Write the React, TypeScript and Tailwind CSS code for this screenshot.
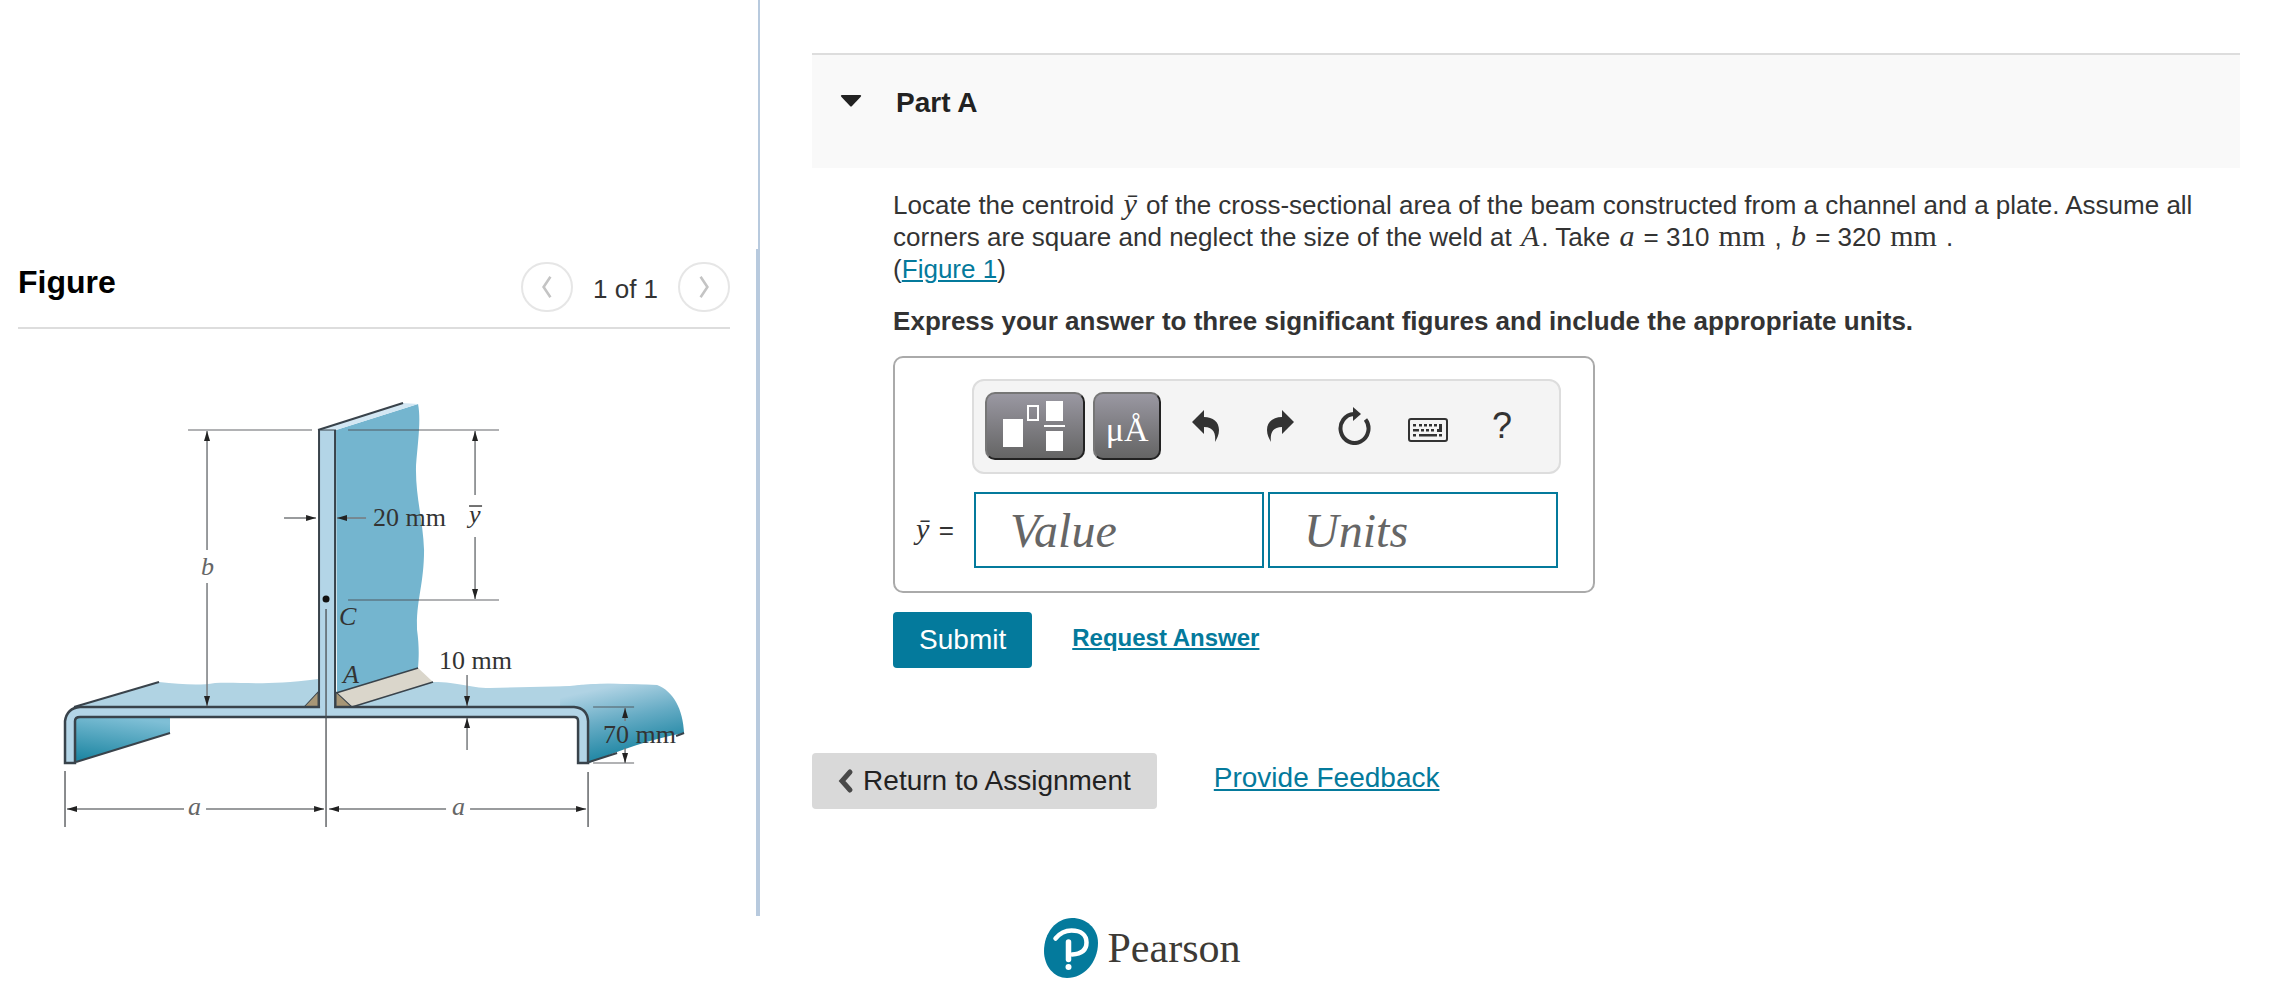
import { useState, type ReactNode } from 'react'

const INK = '#4a4d50'
const EDGE = '#39434b'

const tools: { label: string; icon: ReactNode }[] = [
  { label: 'Undo', icon: <UndoIcon /> },
  { label: 'Redo', icon: <RedoIcon /> },
  { label: 'Reset', icon: <ResetIcon /> },
  { label: 'Keyboard shortcuts', icon: <KeyboardIcon /> },
  { label: 'Help', icon: <span className="text-[36px] leading-10">?</span> },
]

function UndoIcon() {
  return (
    <svg width="28" height="32" viewBox="0 0 28 32" fill="#333">
      <path d="M0 12 L12 0 V7 C21 7 27 12 27 20 C27 25 25 28 23 32 C24 24 22 17 12 17 V24 Z" />
    </svg>
  )
}

function RedoIcon() {
  return (
    <svg width="28" height="32" viewBox="0 0 28 32" fill="#333">
      <path d="M28 12 L16 0 V7 C7 7 1 12 1 20 C1 25 3 28 5 32 C4 24 6 17 16 17 V24 Z" />
    </svg>
  )
}

function ResetIcon() {
  return (
    <svg width="34" height="38" viewBox="0 0 34 38">
      <path d="M17 7 A14 14.500 0 1 0 28.500 12.500" fill="none" stroke="#333" strokeWidth="4" />
      <path d="M16 0 L24 7 L16 14 Z" fill="#333" />
    </svg>
  )
}

function KeyboardIcon() {
  return (
    <svg className="mt-2" width="40" height="24" viewBox="0 0 40 24" fill="#333">
      <rect x="1" y="1" width="38" height="22" rx="2" fill="none" stroke="#333" strokeWidth="2" />
      {[5, 11, 16, 21, 26].map((x) => (
        <rect key={x} x={x} y="6" width="3" height="2.500" />
      ))}
      <path d="M31 6 H34 V14 H29 V11 H31 Z" />
      <rect x="5" y="11" width="6" height="2.500" />
      {[13, 18, 23].map((x) => (
        <rect key={x} x={x} y="11" width="3" height="2.500" />
      ))}
      <rect x="5" y="16" width="3" height="2.500" />
      <rect x="11" y="16" width="18" height="2.500" />
      <rect x="31" y="16" width="3" height="2.500" />
    </svg>
  )
}

function TemplatesIcon() {
  return (
    <svg width="64" height="52" viewBox="0 0 64 52" fill="#fff">
      <rect x="0" y="19" width="20" height="28" />
      <rect x="25" y="6" width="10" height="14" fill="none" stroke="#fff" strokeWidth="2" />
      <rect x="43" y="1" width="17" height="20" />
      <rect x="41" y="25" width="21" height="2" />
      <rect x="43" y="31" width="17" height="20" />
    </svg>
  )
}

function PearsonMark() {
  return (
    <svg width="54" height="60" viewBox="0 0 54 60">
      <path d="M28 0 C42 0 54 10 54 25 C54 44 40 60 23 60 C10 60 0 48 0 33 C0 15 12 0 28 0 Z" fill="#047a9c" />
      <path
        d="M11.500 20.500 C16 15 21 12.500 27.500 12.500 C37 12.500 42.500 17 42.500 24.500 C42.500 32 37 36 28 36.500"
        fill="none"
        stroke="#fff"
        strokeWidth="4.500"
        strokeLinecap="round"
      />
      <path d="M24.500 24 L24.500 41.500" stroke="#fff" strokeWidth="5.500" strokeLinecap="round" />
      <circle cx="24.500" cy="49" r="3" fill="#fff" />
    </svg>
  )
}

// Dimension arrow from (x1, y1) to (x2, y2), head at the second point
function Arrow({ x1, y1, x2, y2 }: { x1: number; y1: number; x2: number; y2: number }) {
  return <line x1={x1} y1={y1} x2={x2} y2={y2} stroke="#777a7d" strokeWidth="1.500" markerEnd="url(#head)" />
}

function BeamFigure() {
  return (
    <svg
      className="w-full h-auto"
      viewBox="18 380 712 460"
      fontFamily='"Liberation Serif", serif'
      fontSize="26"
      fill="#333"
      role="img"
      aria-label="Beam built from a channel and a plate"
    >
      <defs>
        <marker id="head" markerUnits="userSpaceOnUse" markerWidth="10" markerHeight="8" refX="10" refY="4" orient="auto">
          <path d="M0 1 L10 4 L0 7 Z" fill="#222" />
        </marker>
        <linearGradient id="lip" x1="0.6" y1="0" x2="0.3" y2="1">
          <stop offset="0" stopColor="#7fbfd6" />
          <stop offset="1" stopColor="#1f87a3" />
        </linearGradient>
        <linearGradient id="flange" gradientUnits="userSpaceOnUse" x1="625" y1="683" x2="640" y2="750">
          <stop offset="0" stopColor="#b0d3e4" />
          <stop offset="0.500" stopColor="#65abc4" />
          <stop offset="1" stopColor="#2288a5" />
        </linearGradient>
      </defs>

      {/* Top surface of the channel */}
      <path d="M74 707 L159 682 C180 684 198 686 215 683 C245 682 262 686 318 679 V707 Z" fill="#b0d3e3" />
      <path d="M74 707 L159 682" stroke={EDGE} strokeWidth="2" />
      <path d="M352 707 L433 682 C460 682 468 688 490 688 L575 686 C600 682 630 684 657 686 V707 Z" fill="#b0d3e3" />
      <path d="M560 687 C600 682 630 684 657 685 C673 691 683 709 684 733 C650 739 620 750 589 763 V721 Q588 707 560 707 Z" fill="url(#flange)" />
      <path d="M589 762 L617 753 M676 736 L684 733" stroke={EDGE} strokeWidth="2" />
      <path d="M75 718 H170 V733 L76 762 Z" fill="url(#lip)" />
      <path d="M76 762 L170 733" stroke={EDGE} strokeWidth="2" />

      {/* Vertical plate */}
      <path
        d="M336 430 L418 404 C421 420 418 440 416 465 C415 495 423 520 424 550 C424 585 416 600 417 630 C419 645 419 655 418 668 L337 694 Z"
        fill="#74b5cf"
      />
      <path d="M318 430 L403 403 L418 404 L336 430 Z" fill="#d3e7f3" />
      <path d="M318 430 L403 403" stroke={EDGE} strokeWidth="2" />
      <rect x="319" y="430" width="16" height="278" fill="#b3d5e7" />
      <path d="M319 430 V707 M335 430 V707" stroke={EDGE} strokeWidth="2" />
      <path d="M319 430 H336" stroke={EDGE} />

      {/* Weld */}
      <path d="M336 693 L418 668 L433 682 L352 707 Z" fill="#dad6cb" />
      <path d="M336 693 L418 668 M352 707 L433 682" stroke={EDGE} strokeWidth="1.500" />
      <path d="M336 692 L352 707 H336 Z M304 707 L318 692 V707 Z" fill="#a79676" stroke={EDGE} />

      {/* Channel section */}
      <path
        d="M65 763 V721 Q67 708 80 707 H574 Q587 708 588 721 V763 H578 V721 Q578 717 574 717 H80 Q75 717 75 721 V763 Z"
        fill="#b3d5e7"
        stroke={EDGE}
        strokeWidth="2.500"
      />
      <rect x="320" y="700" width="14" height="9" fill="#b3d5e7" />

      {/* Extension lines */}
      <g stroke={INK} strokeWidth="1" opacity="0.85">
        <path d="M188 430 H312 M348 430 H499 M348 600 H499 M593 707 H634 M593 763 H634" />
        <path d="M326 609 V827 M65 771 V827 M588 772 V827" strokeWidth="1.500" />
      </g>
      <circle cx="326" cy="599" r="3.500" fill="#111" />

      <Arrow x1={207} y1={550} x2={207} y2={431} />
      <Arrow x1={207} y1={583} x2={207} y2={706} />
      <Arrow x1={475} y1={495} x2={475} y2={431} />
      <Arrow x1={475} y1={537} x2={475} y2={599} />
      <Arrow x1={284} y1={518} x2={316} y2={518} />
      <Arrow x1={366} y1={518} x2={337} y2={518} />
      <Arrow x1={467} y1={675} x2={467} y2={706} />
      <Arrow x1={467} y1={750} x2={467} y2={718} />
      <Arrow x1={625} y1={721} x2={625} y2={708} />
      <Arrow x1={625} y1={748} x2={625} y2={763} />
      <Arrow x1={184} y1={809} x2={67} y2={809} />
      <Arrow x1={206} y1={809} x2={324} y2={809} />
      <Arrow x1={446} y1={809} x2={329} y2={809} />
      <Arrow x1={470} y1={809} x2={586} y2={809} />

      <text x="373" y="526">20 mm</text>
      <text x="439" y="669">10 mm</text>
      <text x="603" y="743">70 mm</text>
      <g fontStyle="italic">
        <text x="201" y="575" fill="#666">b</text>
        <text x="469" y="523">y</text>
        <text x="339" y="625">C</text>
        <text x="343" y="683">A</text>
        <text x="188" y="815" fill="#666">a</text>
        <text x="452" y="815" fill="#666">a</text>
      </g>
      <path d="M469 506 H482" stroke="#444" strokeWidth="1.500" />
    </svg>
  )
}

function MathText({ children, upright }: { children: ReactNode; upright?: boolean }) {
  return (
    <span
      className={`mx-0.5 font-['Liberation_Serif',serif] text-[30px] leading-none ${upright ? '' : 'italic'}`}
    >
      {children}
    </span>
  )
}

function FigurePanel() {
  return (
    <aside className="w-[33.25%] shrink-0 flex flex-col">
      <div className="h-[249px] pl-[18px] border-r-2 border-[#b8cade]" />
      <div className="flex-1 pl-[18px] pr-[26px] pb-[76px] border-r-4 border-[#b8cade]">
        <div className="flex items-start justify-between h-20 pt-[13px] border-b-2 border-[#ddd]">
          <h2 className="text-[32px] leading-10 font-bold text-black">Figure</h2>
          <div className="flex items-center gap-5">
            <PageButton label="Previous figure" points="14,4 6,16 14,28" />
            <span className="pt-1 text-[26px] leading-8">1 of 1</span>
            <PageButton label="Next figure" points="6,4 14,16 6,28" />
          </div>
        </div>
        <div className="pt-[51px]">
          <BeamFigure />
        </div>
      </div>
    </aside>
  )
}

function PageButton({ label, points }: { label: string; points: string }) {
  return (
    <button
      aria-label={label}
      className="flex items-center justify-center w-[52px] h-[50px] rounded-full border-2 border-[#e6e6e6] bg-white"
    >
      <svg width="20" height="24" viewBox="0 2 20 28" fill="none" stroke="#c4c4c4" strokeWidth="3">
        <polyline points={points} />
      </svg>
    </button>
  )
}

function AnswerBox() {
  const [value, setValue] = useState('')
  const [units, setUnits] = useState('')

  const keyClass =
    'flex items-center justify-center h-[68px] rounded-[10px] border-2 border-t-[#767676] border-l-[#767676] border-r-[#222] border-b-[#222] bg-linear-to-b from-[#9a98a2] to-[#656565] text-white'
  const inputClass =
    "w-[290px] h-[76px] px-[34px] border-2 border-[#047a9c] bg-white font-['Liberation_Serif',serif] italic text-[48px] leading-[56px] text-[#333] placeholder:text-[#666] outline-none"

  return (
    <div className="w-[702px] max-w-full mt-[19px] pt-[21px] pb-[23px] border-2 border-[#aaa] rounded-[10px]">
      <div className="flex items-center gap-2 w-[589px] h-[95px] ml-[77px] pl-[11px] pb-0.5 bg-[#f4f4f4] border-2 border-[#ddd] rounded-xl">
        <button aria-label="Templates" className={`${keyClass} w-[100px]`}>
          <TemplatesIcon />
        </button>
        <button aria-label="Symbols" className={`${keyClass} w-[68px] pt-2 font-['Liberation_Serif',serif] text-[34px] leading-10`}>
          μÅ
        </button>
        <div className="flex items-center">
          {tools.map(({ label, icon }) => (
            <button key={label} aria-label={label} className="flex items-center justify-center w-[74px] h-16">
              {icon}
            </button>
          ))}
        </div>
      </div>
      <div className="flex items-center mt-[18px] pl-[19px]">
        <label htmlFor="answer-value" className="w-[60px] text-[26px] leading-8">
          <MathText>ȳ</MathText> =
        </label>
        <div className="flex gap-1">
          <input
            id="answer-value"
            className={inputClass}
            placeholder="Value"
            value={value}
            onChange={(e) => setValue(e.target.value)}
          />
          <input
            aria-label="Units"
            className={inputClass}
            placeholder="Units"
            value={units}
            onChange={(e) => setUnits(e.target.value)}
          />
        </div>
      </div>
    </div>
  )
}

function PartPanel() {
  return (
    <main className="flex-1 min-w-0 pt-[53px] pl-[52px] pr-[46px]">
      <header className="flex items-start h-[115px] pt-8 pl-7 bg-[#f9f9f9] border-t-2 border-[#ddd]">
        <button aria-expanded="true" className="flex items-center text-[28px] leading-8 font-bold text-[#222]">
          <svg className="mr-[34px] mb-1" width="22" height="14" viewBox="0 0 22 14">
            <path d="M2 1 H20 Q22 1 20.500 3 L12 12 Q11 13 10 12 L1.500 3 Q0 1 2 1 Z" fill="#222" />
          </svg>
          Part A
        </button>
      </header>

      <section className="pl-[81px] pt-[21px] text-[26px] leading-8">
        <p>
          Locate the centroid <MathText>ȳ</MathText> of the cross-sectional area of the beam constructed from a
          channel and a plate. Assume all corners are square and neglect the size of the weld at{' '}
          <MathText>A</MathText>. Take <MathText>a</MathText> = 310 <MathText upright>mm</MathText> ,{' '}
          <MathText>b</MathText> = 320 <MathText upright>mm</MathText> .
          <br />(
          <a href="#figure-1" className="text-[#047a9c] underline">Figure 1</a>)
        </p>
        <p className="mt-5 font-bold">
          Express your answer to three significant figures and include the appropriate units.
        </p>
        <AnswerBox />
        <div className="flex items-center gap-10 mt-[19px]">
          <button className="h-14 px-[26px] rounded bg-[#047a9c] text-[28px] leading-8 text-white">Submit</button>
          <a href="#answer" className="pb-1 text-[24px] leading-7 font-bold text-[#047a9c] underline">Request Answer</a>
        </div>
      </section>

      {/* Bottom navigation */}
      <div className="flex items-center gap-[57px] mt-[85px] text-[28px] leading-8">
        <button className="flex items-center gap-[9px] h-14 pl-[26px] pr-[26px] rounded bg-[#d9d9d9] text-[#222]">
          <svg width="16" height="26" viewBox="0 0 16 26" fill="none" stroke="#484848" strokeWidth="5">
            <path d="M12 4 L4 13 L12 22" strokeLinecap="round" />
          </svg>
          Return to Assignment
        </button>
        <a href="#feedback" className="pb-1.5 text-[#047a9c] underline">Provide Feedback</a>
      </div>
    </main>
  )
}

export default function App() {
  return (
    <div className="min-h-screen bg-white font-['Liberation_Sans',Arial,sans-serif] text-[#333]">
      <div className="flex">
        <FigurePanel />
        <PartPanel />
      </div>
      <footer className="flex items-center justify-center gap-[10px] pr-0.5 pt-0.5">
        <PearsonMark />
        <span className="font-['Liberation_Serif',serif] text-[42px] leading-[56px] text-[#3d3a35]">Pearson</span>
      </footer>
    </div>
  )
}
